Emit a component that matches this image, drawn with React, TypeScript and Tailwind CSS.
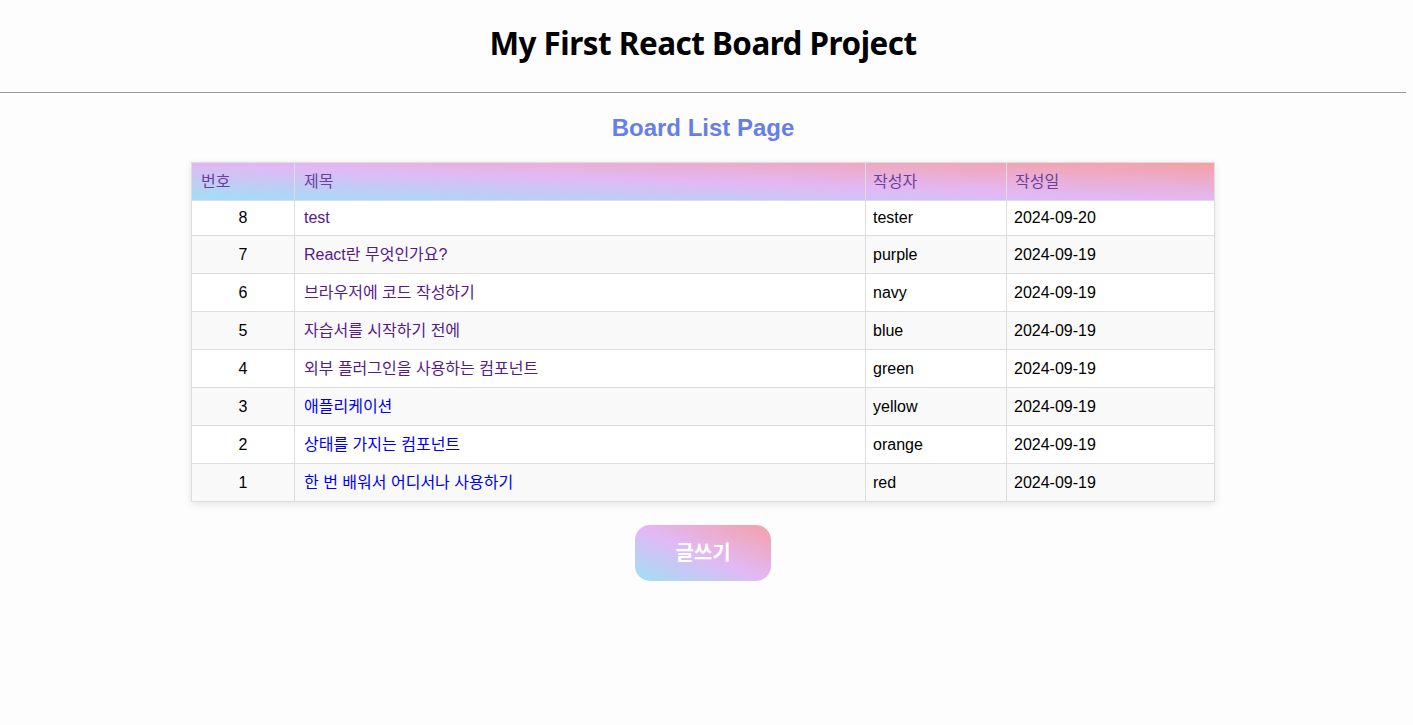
const posts = [
    { id: 8, title: "test", writer: "tester", date: "2024-09-20", visited: true },
    { id: 7, title: "React란 무엇인가요?", writer: "purple", date: "2024-09-19", visited: true },
    { id: 6, title: "브라우저에 코드 작성하기", writer: "navy", date: "2024-09-19", visited: true },
    { id: 5, title: "자습서를 시작하기 전에", writer: "blue", date: "2024-09-19", visited: true },
    { id: 4, title: "외부 플러그인을 사용하는 컴포넌트", writer: "green", date: "2024-09-19", visited: true },
    { id: 3, title: "애플리케이션", writer: "yellow", date: "2024-09-19", visited: false },
    { id: 2, title: "상태를 가지는 컴포넌트", writer: "orange", date: "2024-09-19", visited: false },
    { id: 1, title: "한 번 배워서 어디서나 사용하기", writer: "red", date: "2024-09-19", visited: false },
]

const gradient = "bg-[linear-gradient(to_top_right,#9fe0f5,#e2b8f4,#f5a0a6)]"

function Header() {
    return (
        <header className="h-[93px] flex items-center justify-center border-b border-[#9a9a9a]">
            <h1 className="text-[31.4px] font-bold text-black font-['Noto_Sans','Noto_Sans_CJK_KR',sans-serif] tracking-[-0.5px] -mt-[6px]">
                My First React Board Project
            </h1>
        </header>
    )
}

function BoardList() {
    return (
        <div className="flex flex-col items-center">
            <h2 className="mt-[21px] text-[24px] leading-[28px] font-bold text-[#667eea]">Board List Page</h2>
            <table className="mt-[20px] w-[1023px] table-fixed border-collapse shadow-[0_2px_8px_rgba(0,0,0,0.1)] text-[16px]">
                <colgroup>
                    <col className="w-[103px]" />
                    <col className="w-[571px]" />
                    <col className="w-[141px]" />
                    <col className="w-[208px]" />
                </colgroup>
                <thead>
                    <tr className={`${gradient} leading-[21px]`}>
                        <th className="border border-[#ddd] px-[9px] py-[8px] text-left font-normal text-[#6b3fa0]">번호</th>
                        <th className="border border-[#ddd] px-[9px] py-[8px] text-left font-normal text-[#6b3fa0]">제목</th>
                        <th className="border border-[#ddd] px-[7px] py-[8px] text-left font-normal text-[#6b3fa0]">작성자</th>
                        <th className="border border-[#ddd] px-[8px] py-[8px] text-left font-normal text-[#6b3fa0]">작성일</th>
                    </tr>
                </thead>
                <tbody>
                    {posts.map((p, i) => (
                        <tr
                            key={p.id}
                            className={`${i % 2 === 1 ? "bg-[#f9f9f9]" : "bg-white"} ${p.id === 8 ? "leading-[18px]" : "leading-[21px]"}`}
                        >
                            <td className="border border-[#ddd] px-[9px] py-[8px] text-center text-black">{p.id}</td>
                            <td className="border border-[#ddd] px-[9px] py-[8px]">
                                <a href="#" className={p.visited ? "text-[#551a8b]" : "text-[#0000ee]"}>
                                    {p.title}
                                </a>
                            </td>
                            <td className="border border-[#ddd] px-[7px] py-[8px] text-black">{p.writer}</td>
                            <td className="border border-[#ddd] px-[7px] py-[8px] text-black">{p.date}</td>
                        </tr>
                    ))}
                </tbody>
            </table>
            <button
                className={`mt-[23px] w-[136px] h-[56px] rounded-[15px] ${gradient} text-white text-[20px] font-bold`}
            >
                글쓰기
            </button>
        </div>
    )
}

export default function App() {
    return (
        <div className="min-h-[725px] pr-[7px] bg-[#fdfdfd] font-['Liberation_Sans','Noto_Sans_CJK_KR',sans-serif]">
            <Header />
            <BoardList />
        </div>
    )
}
